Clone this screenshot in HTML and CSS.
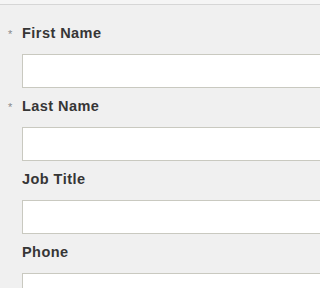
FILE: index.html
```html
<!DOCTYPE html>
<html>
<head>
<meta charset="utf-8">
<link rel="stylesheet" href="styles.css">
</head>
<body>
<div class="topbar"></div>
<form class="form">
  <div class="field">
    <label class="label required">First Name</label>
    <input class="input" type="text">
  </div>
  <div class="field">
    <label class="label required">Last Name</label>
    <input class="input" type="text">
  </div>
  <div class="field">
    <label class="label">Job Title</label>
    <input class="input" type="text">
  </div>
  <div class="field">
    <label class="label">Phone</label>
    <input class="input" type="text">
  </div>
</form>
</body>
</html>
```
FILE: styles.css
```css
html, body {
  margin: 0;
  padding: 0;
  width: 100%;
  height: 100%;
  background: #f0f0f0;
  overflow: hidden;
}
.topbar {
  height: 4px;
  background: #f5f5f5;
  border-bottom: 1px solid #d6d6d6;
}
.form {
  margin: 0;
  height: calc(100% - 5px);
  box-sizing: border-box;
  padding: 20px 0 0 22px;
  display: flex;
  flex-direction: column;
  overflow: hidden;
}
.field {
  display: flex;
  flex-direction: column;
  flex-shrink: 0;
  margin-bottom: 10px;
}
.label {
  display: flex;
  align-items: center;
  height: 16px;
  margin-bottom: 13px;
  font-family: "Liberation Sans", Arial, sans-serif;
  font-weight: bold;
  font-size: 14.5px;
  letter-spacing: 0.45px;
  color: #363636;
}
.label.required::before {
  content: "*";
  width: 13px;
  margin-left: -13px;
  font-size: 11px;
  font-weight: normal;
  color: #8a8a8a;
  letter-spacing: 0;
  position: relative;
  top: 1px;
  text-indent: -1px;
}
.input {
  box-sizing: border-box;
  width: 1200px;
  height: 34px;
  margin: 0;
  border: 1px solid #c9c9c0;
  background: #ffffff;
  border-radius: 0;
  padding: 0 6px;
  outline: none;
  flex-shrink: 0;
}
```
